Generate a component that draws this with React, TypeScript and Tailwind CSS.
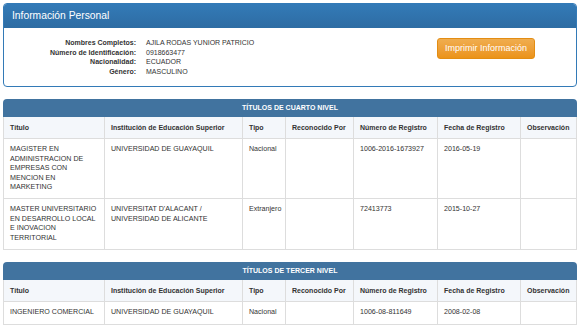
import React from 'react';

type Titulo = {
  titulo: string;
  institucion: string;
  tipo: string;
  reconocido: string;
  registro: string;
  fecha: string;
  observacion: string;
};

const HEADERS = [
  'Título',
  'Institución de Educación Superior',
  'Tipo',
  'Reconocido Por',
  'Número de Registro',
  'Fecha de Registro',
  'Observación',
];

const cuartoNivel: Titulo[] = [
  {
    titulo: 'MAGISTER EN ADMINISTRACION DE EMPRESAS CON MENCION EN MARKETING',
    institucion: 'UNIVERSIDAD DE GUAYAQUIL',
    tipo: 'Nacional',
    reconocido: '',
    registro: '1006-2016-1673927',
    fecha: '2016-05-19',
    observacion: '',
  },
  {
    titulo: 'MASTER UNIVERSITARIO EN DESARROLLO LOCAL E INOVACION TERRITORIAL',
    institucion: "UNIVERSITAT D'ALACANT / UNIVERSIDAD DE ALICANTE",
    tipo: 'Extranjero',
    reconocido: '',
    registro: '72413773',
    fecha: '2015-10-27',
    observacion: '',
  },
];

const tercerNivel: Titulo[] = [
  {
    titulo: 'INGENIERO COMERCIAL',
    institucion: 'UNIVERSIDAD DE GUAYAQUIL',
    tipo: 'Nacional',
    reconocido: '',
    registro: '1006-08-811649',
    fecha: '2008-02-08',
    observacion: '',
  },
];

const datos = [
  ['Nombres Completos:', 'AJILA RODAS YUNIOR PATRICIO'],
  ['Número de Identificación:', '0918663477'],
  ['Nacionalidad:', 'ECUADOR'],
  ['Género:', 'MASCULINO'],
];

const TitulosTable: React.FC<{ title: string; rows: Titulo[] }> = ({ title, rows }) => (
  <div className="mt-[12px]">
    <div className="h-[18px] rounded-t-[4px] bg-[#41739f] flex items-center justify-center text-white text-[7px] font-bold">
      {title}
    </div>
    <table className="w-full table-fixed border-collapse text-[7.1px] leading-[9.4px]">
      <colgroup>
        <col className="w-[101px]" />
        <col className="w-[138px]" />
        <col className="w-[43px]" />
        <col className="w-[68px]" />
        <col className="w-[84px]" />
        <col className="w-[83px]" />
        <col />
      </colgroup>
      <thead>
        <tr className="bg-[#f4f7fb]">
          {HEADERS.map((h) => (
            <th
              key={h}
              className="border border-[#dddddd] border-t-0 px-[6px] py-[6px] text-left font-bold text-[7px] whitespace-nowrap"
            >
              {h}
            </th>
          ))}
        </tr>
      </thead>
      <tbody>
        {rows.map((r) => (
          <tr key={r.registro}>
            {[r.titulo, r.institucion, r.tipo, r.reconocido, r.registro, r.fecha, r.observacion].map((v, i) => (
              <td key={i} className="border border-[#dddddd] px-[6px] py-[6px] align-top">
                {v}
              </td>
            ))}
          </tr>
        ))}
      </tbody>
    </table>
  </div>
);

const App: React.FC = () => {
  return (
    <div className="min-h-screen bg-white pt-[3px] pl-[3px] pr-[7px] font-['Liberation_Sans',Arial,sans-serif] text-[#333333]">
      {/* Información personal */}
      <div className="rounded-[4px] border border-[#337ab7] overflow-hidden">
        <div className="h-[24px] px-[8px] flex items-center bg-gradient-to-b from-[#337ab7] to-[#2e6da4] border-b border-[#2e6da4] text-white text-[10.3px]">
          Información Personal
        </div>
        <div className="flex items-start h-[58px] pt-[10px]">
          <div className="grid grid-cols-[126px_1fr] gap-x-[10px] pl-[6px] text-[7px] leading-[9.6px]">
            {datos.map(([label, value]) => (
              <React.Fragment key={label}>
                <span className="text-right font-bold">{label}</span>
                <span>{value}</span>
              </React.Fragment>
            ))}
          </div>
          <button className="ml-auto mr-[41px] h-[21px] w-[98px] rounded-[3px] border border-[#e38d13] bg-gradient-to-b from-[#f0ad4e] to-[#eb9316] text-white text-[9px]">
            Imprimir Información
          </button>
        </div>
      </div>

      <TitulosTable title="TÍTULOS DE CUARTO NIVEL" rows={cuartoNivel} />
      <TitulosTable title="TÍTULOS DE TERCER NIVEL" rows={tercerNivel} />
    </div>
  );
};

export default App;
